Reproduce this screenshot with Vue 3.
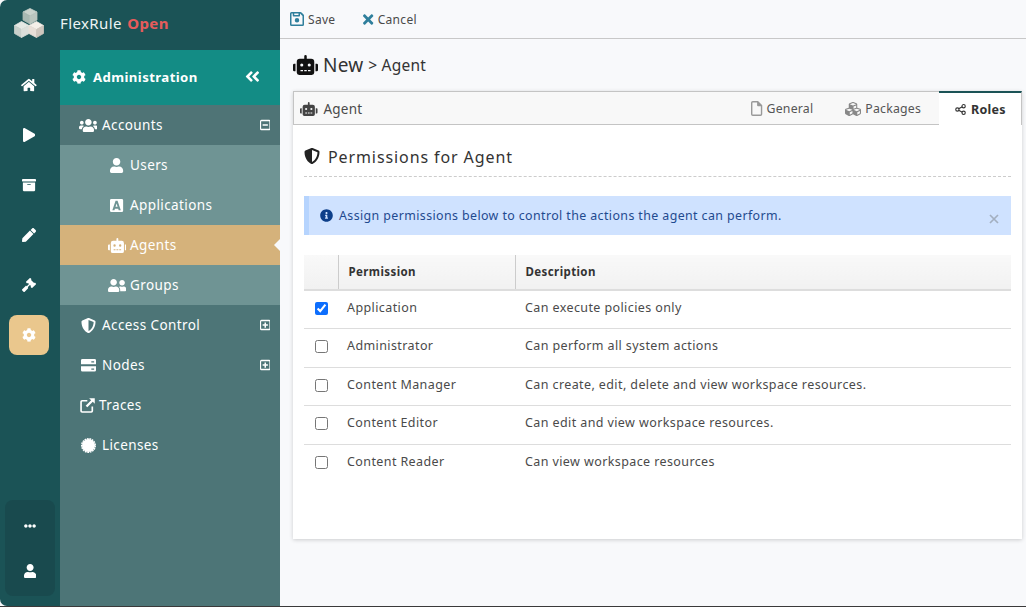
<script setup>
import { h } from 'vue'

const icons = {
  home: [576, 'M280.37 148.26L96 300.11V464a16 16 0 0 0 16 16l112.06-.29a16 16 0 0 0 15.92-16V368a16 16 0 0 1 16-16h64a16 16 0 0 1 16 16v95.64a16 16 0 0 0 16 16.05L464 480a16 16 0 0 0 16-16V300L295.67 148.26a12.19 12.19 0 0 0-15.3 0zM571.6 251.47L488 182.56V44.05a12 12 0 0 0-12-12h-56a12 12 0 0 0-12 12v72.61L318.47 43a48 48 0 0 0-61 0L4.34 251.47a12 12 0 0 0-1.6 16.9l25.5 31A12 12 0 0 0 45.15 301l235.22-193.74a12.19 12.19 0 0 1 15.3 0L530.9 301a12 12 0 0 0 16.9-1.6l25.5-31a12 12 0 0 0-1.7-16.93z'],
  play: [448, 'M424.4 214.7L72.4 6.6C43.8-10.3 0 6.1 0 47.9V464c0 37.5 40.7 60.1 72.4 41.3l352-208c31.4-18.5 31.5-64.1 0-82.6z'],
  archive: [512, 'M32 448c0 17.7 14.3 32 32 32h384c17.7 0 32-14.3 32-32V160H32v288zm160-212c0-6.6 5.4-12 12-12h104c6.6 0 12 5.4 12 12v8c0 6.6-5.4 12-12 12H204c-6.6 0-12-5.4-12-12v-8zM480 32H32C14.3 32 0 46.3 0 64v48c0 8.8 7.2 16 16 16h480c8.8 0 16-7.2 16-16V64c0-17.7-14.3-32-32-32z'],
  pen: [512, 'M290.74 93.24l128.02 128.02-277.99 277.99-114.14 12.6C11.35 513.54-1.56 500.62.14 485.34l12.7-114.22 277.9-278.88zm207.2-19.06l-60.11-60.11c-18.75-18.75-49.16-18.75-67.91 0l-56.55 56.55 128.02 128.02 56.55-56.55c18.75-18.76 18.75-49.16 0-67.91z'],
  gavel: [512, 'M504.971 199.362l-22.627-22.627c-9.373-9.373-24.569-9.373-33.941 0l-5.657 5.657L329.608 69.255l5.657-5.657c9.373-9.373 9.373-24.569 0-33.941L312.638 7.029c-9.373-9.373-24.569-9.373-33.941 0L154.246 131.48c-9.373 9.373-9.373 24.569 0 33.941l22.627 22.627c9.373 9.373 24.569 9.373 33.941 0l5.657-5.657 39.598 39.598-81.04 81.04-5.657-5.657c-12.497-12.497-32.758-12.497-45.255 0L9.373 412.118c-12.497 12.497-12.497 32.758 0 45.255l45.255 45.255c12.497 12.497 32.758 12.497 45.255 0l114.745-114.745c12.497-12.497 12.497-32.758 0-45.255l-5.657-5.657 81.04-81.04 39.598 39.598-5.657 5.657c-9.373 9.373-9.373 24.569 0 33.941l22.627 22.627c9.373 9.373 24.569 9.373 33.941 0l124.451-124.451c9.372-9.372 9.372-24.568 0-33.941z'],
  cog: [512, 'M487.4 315.7l-42.6-24.6c4.3-23.2 4.3-47 0-70.2l42.6-24.6c4.9-2.8 7.1-8.6 5.5-14-11.1-35.6-30-67.8-54.7-94.6-3.8-4.1-10-5.1-14.8-2.3L380.8 110c-17.9-15.4-38.5-27.3-60.8-35.1V25.8c0-5.6-3.9-10.5-9.4-11.7-36.7-8.2-74.3-7.8-109.2 0-5.5 1.2-9.4 6.1-9.4 11.7V75c-22.2 7.9-42.8 19.8-60.8 35.1L88.7 85.5c-4.9-2.8-11-1.9-14.8 2.3-24.7 26.7-43.6 58.9-54.7 94.6-1.7 5.4.6 11.2 5.5 14L67.3 221c-4.3 23.2-4.3 47 0 70.2l-42.6 24.6c-4.9 2.8-7.1 8.6-5.5 14 11.1 35.6 30 67.8 54.7 94.6 3.8 4.1 10 5.1 14.8 2.3l42.6-24.6c17.9 15.4 38.5 27.3 60.8 35.1v49.2c0 5.6 3.9 10.5 9.4 11.7 36.7 8.2 74.3 7.8 109.2 0 5.5-1.2 9.4-6.1 9.4-11.7v-49.2c22.2-7.9 42.8-19.8 60.8-35.1l42.6 24.6c4.9 2.8 11 1.9 14.8-2.3 24.7-26.7 43.6-58.9 54.7-94.6 1.5-5.5-.7-11.3-5.6-14.1zM256 336c-44.1 0-80-35.9-80-80s35.9-80 80-80 80 35.9 80 80-35.9 80-80 80z'],
  user: [448, 'M224 256c70.7 0 128-57.3 128-128S294.7 0 224 0 96 57.3 96 128s57.3 128 128 128zm89.6 32h-16.7c-22.2 10.2-46.9 16-72.9 16s-50.6-5.8-72.9-16h-16.7C60.2 288 0 348.2 0 422.4V464c0 26.5 21.5 48 48 48h352c26.5 0 48-21.5 48-48v-41.6c0-74.2-60.2-134.4-134.4-134.4z'],
  users: [640, 'M96 224c35.3 0 64-28.7 64-64s-28.7-64-64-64-64 28.7-64 64 28.7 64 64 64zm448 0c35.3 0 64-28.7 64-64s-28.7-64-64-64-64 28.7-64 64 28.7 64 64 64zm32 32h-64c-17.6 0-33.5 7.1-45.1 18.6 40.3 22.1 68.9 62 75.1 109.4h66c17.7 0 32-14.3 32-32v-32c0-35.3-28.7-64-64-64zm-256 0c61.9 0 112-50.1 112-112S381.9 32 320 32 208 82.1 208 144s50.1 112 112 112zm76.8 32h-8.3c-20.8 10-43.9 16-68.5 16s-47.6-6-68.5-16h-8.3C179.6 288 128 339.6 128 403.2V432c0 26.5 21.5 48 48 48h288c26.5 0 48-21.5 48-48v-28.8c0-63.6-51.6-115.2-115.2-115.2zm-223.7-13.4C161.5 263.1 145.6 256 128 256H64c-35.3 0-64 28.7-64 64v32c0 17.7 14.3 32 32 32h65.9c6.3-47.4 34.9-87.3 75.2-109.4z'],
  friends: [640, 'M192 256c61.9 0 112-50.1 112-112S253.9 32 192 32 80 82.1 80 144s50.1 112 112 112zm76.8 32h-8.3c-20.8 10-43.9 16-68.5 16s-47.6-6-68.5-16h-8.3C51.6 288 0 339.6 0 403.2V432c0 26.5 21.5 48 48 48h288c26.5 0 48-21.5 48-48v-28.8c0-63.6-51.6-115.2-115.2-115.2zM480 256c53 0 96-43 96-96s-43-96-96-96-96 43-96 96 43 96 96 96zm48 32h-3.8c-13.9 4.8-28.6 8-44.2 8s-30.3-3.2-44.2-8H432c-20.4 0-39.2 5.9-55.7 15.4 24.4 26.3 39.7 61.2 39.7 99.8v38.4c0 2.2-.5 4.3-.6 6.4H592c26.5 0 48-21.5 48-48 0-61.9-50.1-112-112-112z'],
  robot: [640, 'M32,224H64V416H32A31.96,31.96,0,0,1,0,384V256A31.96,31.96,0,0,1,32,224Zm512-48V448a64.06,64.06,0,0,1-64,64H160a64.06,64.06,0,0,1-64-64V176a79.97,79.97,0,0,1,80-80H288V32a32,32,0,0,1,64,0V96H464A79.97,79.97,0,0,1,544,176ZM264,256a40,40,0,1,0-40,40A40,40,0,0,0,264,256Zm-8,128H192v32h64Zm96,0H288v32h64ZM456,256a40,40,0,1,0-40,40A40,40,0,0,0,456,256Zm-8,128H384v32h64ZM640,256V384a31.96,31.96,0,0,1-32,32H576V224h32A31.96,31.96,0,0,1,640,256Z'],
  shield: [512, 'M466.5 83.7l-192-80a48.15 48.15 0 0 0-36.9 0l-192 80C27.7 91.1 16 108.6 16 128c0 198.5 114.5 335.7 221.5 380.3 11.8 4.9 25.1 4.9 36.9 0C360.1 472.6 496 349.3 496 128c0-19.4-11.7-36.9-29.5-44.3zM256.1 446.3l-.1-381 175.9 73.3c-3.3 151.4-82.1 261.1-175.8 307.7z'],
  server: [512, 'M48 32h416a48 48 0 0 1 48 48v136H0V80a48 48 0 0 1 48-48zM0 280h512v136a48 48 0 0 1-48 48H48a48 48 0 0 1-48-48zM352 112v40h96v-40zM352 360v40h96v-40z'],
  angles: [448, 'M223.7 239l136-136c9.4-9.4 24.6-9.4 33.9 0l22.6 22.6c9.4 9.4 9.4 24.6 0 33.9L319.9 256l96.4 96.4c9.4 9.4 9.4 24.6 0 33.9L393.7 409c-9.4 9.4-24.6 9.4-33.9 0l-136-136c-9.5-9.4-9.5-24.6-.1-34zm-192 34l136 136c9.4 9.4 24.6 9.4 33.9 0l22.6-22.6c9.4-9.4 9.4-24.6 0-33.9L127.9 256l96.4-96.4c9.4-9.4 9.4-24.6 0-33.9L201.7 103c-9.4-9.4-24.6-9.4-33.9 0l-136 136c-9.5 9.4-9.5 24.6-.1 34z'],
  dots: [512, 'M328 256c0 39.8-32.2 72-72 72s-72-32.2-72-72 32.2-72 72-72 72 32.2 72 72zm104-72c-39.8 0-72 32.2-72 72s32.2 72 72 72 72-32.2 72-72-32.2-72-72-72zm-352 0c-39.8 0-72 32.2-72 72s32.2 72 72 72 72-32.2 72-72-32.2-72-72-72z'],
  cubes: [512, 'M488.6 250.2L392 214V105.5c0-15-9.3-28.4-23.4-33.7l-100-37.5c-8.1-3.1-17.1-3.1-25.3 0l-100 37.5c-14.1 5.3-23.4 18.7-23.4 33.7V214l-96.6 36.2C9.3 255.5 0 268.9 0 283.9V394c0 13.6 7.7 26.1 19.9 32.2l100 50c10.1 5.1 22.1 5.1 32.2 0l103.9-52 103.9 52c10.1 5.1 22.1 5.1 32.2 0l100-50c12.2-6.1 19.9-18.6 19.9-32.2V283.9c0-15-9.3-28.4-23.4-33.7zM358 214.8l-85 31.9v-68.2l85-37v73.3zM154 104.1l102-38.2 102 38.2v.6l-102 41.4-102-41.4v-.6zm84 291.1l-85 42.5v-79.1l85-38.8v75.4zm0-112l-102 41.4-102-41.4v-.6l102-38.2 102 38.2v.6zm240 112l-85 42.5v-79.1l85-38.8v75.4zm0-112l-102 41.4-102-41.4v-.6l102-38.2 102 38.2v.6z'],
  info: [512, 'M256 8C119.043 8 8 119.083 8 256c0 136.997 111.043 248 248 248s248-111.003 248-248C504 119.083 392.957 8 256 8zm0 110c23.196 0 42 18.804 42 42s-18.804 42-42 42-42-18.804-42-42 18.804-42 42-42zm56 254c0 6.627-5.373 12-12 12h-88c-6.627 0-12-5.373-12-12v-24c0-6.627 5.373-12 12-12h12v-64h-12c-6.627 0-12-5.373-12-12v-24c0-6.627 5.373-12 12-12h64c6.627 0 12 5.373 12 12v100h12c6.627 0 12 5.373 12 12v24z'],
  appbox: [448, 'M48 32h352a48 48 0 0 1 48 48v352a48 48 0 0 1-48 48H48a48 48 0 0 1-48-48V80a48 48 0 0 1 48-48zM190 96L80 416h72l16-52h112l16 52h72L258 96zM224 190l36 112h-72z'],
  link: [512, 'M250 64v56H78a14 14 0 0 0-14 14v300a14 14 0 0 0 14 14h300a14 14 0 0 0 14-14V290h56v152a62 62 0 0 1-62 62H70a62 62 0 0 1-62-62V126a62 62 0 0 1 62-62zM312 8h192v192l-68-68-186 186-56-56 186-186z'],
  plus: [448, 'M64 32h320a64 64 0 0 1 64 64v320a64 64 0 0 1-64 64H64a64 64 0 0 1-64-64V96a64 64 0 0 1 64-64zM56 96a8 8 0 0 0-8 8v304a8 8 0 0 0 8 8h336a8 8 0 0 0 8-8V104a8 8 0 0 0-8-8zM192 144h64v80h80v64h-80v80h-64v-80h-80v-64h80z'],
  minus: [448, 'M64 32h320a64 64 0 0 1 64 64v320a64 64 0 0 1-64 64H64a64 64 0 0 1-64-64V96a64 64 0 0 1 64-64zM56 96a8 8 0 0 0-8 8v304a8 8 0 0 0 8 8h336a8 8 0 0 0 8-8V104a8 8 0 0 0-8-8zM112 224h224v64H112z'],
  file: [384, 'M60 0h180l144 144v308a60 60 0 0 1-60 60H60a60 60 0 0 1-60-60V60A60 60 0 0 1 60 0zm0 48a12 12 0 0 0-12 12v392a12 12 0 0 0 12 12h264a12 12 0 0 0 12-12V176H240a32 32 0 0 1-32-32V48z'],
  save: [448, 'M48 32h288a48 48 0 0 1 34 14l64 64a48 48 0 0 1 14 34v288a48 48 0 0 1-48 48H48a48 48 0 0 1-48-48V80a48 48 0 0 1 48-48zm0 48v352h352V160l-80-80v72a24 24 0 0 1-24 24H112a24 24 0 0 1-24-24V80zm88 0v48h136V80zm88 144a72 72 0 1 1 0 144 72 72 0 0 1 0-144z'],
  times: [352, 'M242.7 256l100-100c12.3-12.3 12.3-32.2 0-44.5l-22.2-22.2c-12.3-12.3-32.2-12.3-44.5 0L176 189.3 76 89.3c-12.3-12.3-32.2-12.3-44.5 0L9.3 111.5c-12.3 12.3-12.3 32.2 0 44.5l100 100-100 100c-12.3 12.3-12.3 32.2 0 44.5l22.2 22.2c12.3 12.3 32.2 12.3 44.5 0l100-100 100 100c12.3 12.3 32.2 12.3 44.5 0l22.2-22.2c12.3-12.3 12.3-32.2 0-44.5z']
}

// small helper so the template stays readable
const Ico = (props) => {
  const [w, d] = icons[props.name]
  return h('svg', { viewBox: `0 0 ${w} 512`, class: 'ico' }, [h('path', { d, fill: 'currentColor', 'fill-rule': 'evenodd' })])
}
Ico.props = ['name']

const railItems = ['home', 'play', 'archive', 'pen', 'gavel', 'cog']

const permissions = [
  { name: 'Application', desc: 'Can execute policies only', checked: true },
  { name: 'Administrator', desc: 'Can perform all system actions', checked: false },
  { name: 'Content Manager', desc: 'Can create, edit, delete and view workspace resources.', checked: false },
  { name: 'Content Editor', desc: 'Can edit and view workspace resources.', checked: false },
  { name: 'Content Reader', desc: 'Can view workspace resources', checked: false }
]
</script>

<template>
  <div class="app">
    <aside class="side">
      <div class="brand">
        <svg class="logo" viewBox="0 0 30 30" stroke-linejoin="round">
          <g stroke-width="0.8">
            <polygon points="16,0.5 23,4 16,8 9,4" fill="#c9d2cc" stroke="#c9d2cc" />
            <polygon points="9,4 16,8 16,16 9,12" fill="#a9b9b3" stroke="#a9b9b3" />
            <polygon points="23,4 16,8 16,16 23,12" fill="#bac5bf" stroke="#bac5bf" />
            <polygon points="7.5,13.5 15,17.5 7.5,21.5 0.5,17.5" fill="#e4e8e4" stroke="#e4e8e4" />
            <polygon points="0.5,17.5 7.5,21.5 7.5,29.5 0.5,25.5" fill="#c9d0cb" stroke="#c9d0cb" />
            <polygon points="15,17.5 7.5,21.5 7.5,29.5 15,25.5" fill="#dcdfdb" stroke="#dcdfdb" />
            <polygon points="22.5,13.5 29.5,17.5 22.5,21.5 15,17.5" fill="#f4efe9" stroke="#f4efe9" />
            <polygon points="15,17.5 22.5,21.5 22.5,29.5 15,25.5" fill="#e8dfd8" stroke="#e8dfd8" />
            <polygon points="29.5,17.5 22.5,21.5 22.5,29.5 29.5,25.5" fill="#cfc6be" stroke="#cfc6be" />
          </g>
        </svg>
        <span class="brand-name">FlexRule <b>Open</b></span>
      </div>
      <div class="side-body">
        <nav class="rail">
          <div class="rail-list">
            <div v-for="item in railItems" :key="item" class="rail-item" :class="{ active: item === 'cog' }">
              <Ico :name="item" />
            </div>
          </div>
          <div class="rail-bottom">
            <Ico name="dots" class="r-dots" />
            <Ico name="user" class="r-user" />
          </div>
        </nav>
        <div class="menu">
          <div class="menu-head">
            <Ico name="cog" class="head-cog" />
            <span class="menu-title">Administration</span>
            <Ico name="angles" class="head-angles" />
          </div>
          <div class="row open">
            <span class="row-ico"><Ico name="users" /></span>Accounts
            <Ico name="minus" class="tree" />
          </div>
          <div class="sub"><span class="sub-ico"><Ico name="user" class="s15" /></span>Users</div>
          <div class="sub"><span class="sub-ico"><Ico name="appbox" class="s15" /></span>Applications</div>
          <div class="sub current"><span class="sub-ico"><Ico name="robot" class="s15" /></span>Agents</div>
          <div class="sub"><span class="sub-ico"><Ico name="friends" class="s15" /></span>Groups</div>
          <div class="row">
            <span class="row-ico"><Ico name="shield" /></span>Access Control
            <Ico name="plus" class="tree" />
          </div>
          <div class="row">
            <span class="row-ico"><Ico name="server" /></span>Nodes
            <Ico name="plus" class="tree" />
          </div>
          <div class="row">
            <span class="row-ico link"><Ico name="link" /></span>Traces
          </div>
          <div class="row">
            <span class="row-ico">
              <svg class="ico" viewBox="0 0 30 30">
                <circle cx="15" cy="15" r="13" fill="currentColor" />
                <circle cx="15" cy="15" r="13.5" fill="none" stroke="currentColor" stroke-width="3" stroke-dasharray="3.5 1.5" />
              </svg>
            </span>Licenses
          </div>
        </div>
      </div>
    </aside>

    <main class="main">
      <div class="toolbar">
        <span class="tool"><Ico name="save" class="t-save" />Save</span>
        <span class="tool"><Ico name="times" class="t-cancel" />Cancel</span>
      </div>
      <div class="page">
        <h1 class="page-title">
          <Ico name="robot" class="title-ico" />
          <span class="big">New</span><span class="crumb">&gt; Agent</span>
        </h1>
        <section class="panel">
          <div class="tabs">
            <div class="tabs-left"><Ico name="robot" class="tab-robot" />Agent</div>
            <div class="tab general"><Ico name="file" class="tab-file" />General</div>
            <div class="tab"><Ico name="cubes" class="tab-cubes" />Packages</div>
            <div class="tab active">
              <svg class="tab-share" viewBox="0 0 12 12">
                <path d="M4 5.2 8 3M4 6.8 8 9" stroke="currentColor" stroke-width="1.2" fill="none" />
                <circle cx="2.6" cy="6" r="1.8" stroke="currentColor" stroke-width="1.2" fill="none" />
                <circle cx="9.4" cy="2.4" r="1.8" stroke="currentColor" stroke-width="1.2" fill="none" />
                <circle cx="9.4" cy="9.6" r="1.8" stroke="currentColor" stroke-width="1.2" fill="none" />
              </svg>
              Roles
            </div>
          </div>
          <div class="panel-body">
            <h2 class="sec-title"><Ico name="shield" class="sec-ico" />Permissions for Agent</h2>
            <div class="alert">
              <Ico name="info" class="alert-ico" />
              <span>Assign permissions below to control the actions the agent can perform.</span>
              <svg class="alert-x" viewBox="0 0 10 10">
                <path d="M1 1 9 9M9 1 1 9" stroke="currentColor" stroke-width="1.7" />
              </svg>
            </div>
            <table class="perm">
              <thead>
                <tr>
                  <th class="c0"></th>
                  <th class="c1">Permission</th>
                  <th>Description</th>
                </tr>
              </thead>
              <tbody>
                <tr v-for="p in permissions" :key="p.name">
                  <td class="c0"><input type="checkbox" :checked="p.checked" /></td>
                  <td>{{ p.name }}</td>
                  <td class="desc">{{ p.desc }}</td>
                </tr>
              </tbody>
            </table>
          </div>
        </section>
      </div>
    </main>
  </div>
</template>

<style>
html, body {
  margin: 0;
  background: #3a3a3a;
}
</style>

<style scoped>
.app {
  display: flex;
  width: 1026px;
  height: 606px;
  overflow: hidden;
  font-family: "Noto Sans", "Open Sans", sans-serif;
  font-size: 13px;
  letter-spacing: 0.4px;
  color: #4a4a4a;
  background: #f8f9fb;
}

.ico {
  display: block;
  height: 14px;
  fill: currentColor;
}

/* Left side */
.side {
  width: 280px;
  flex: none;
  display: flex;
  flex-direction: column;
  background: #1b5356;
  color: #fff;
  border-radius: 7px 0 0 7px;
}

.brand {
  height: 50px;
  flex: none;
  display: flex;
  align-items: center;
  padding-left: 14px;
  padding-bottom: 4px;
  box-sizing: border-box;
  gap: 16px;
}

.logo {
  width: 30px;
  height: 30px;
}

.brand-name {
  font-size: 15px;
  color: #eef4f4;
}

.brand-name b {
  color: #e65c5c;
  font-weight: 700;
  margin-left: 1px;
}

.side-body {
  flex: 1;
  display: flex;
  min-height: 0;
}

.rail {
  width: 60px;
  flex: none;
  display: flex;
  flex-direction: column;
  align-items: center;
  justify-content: space-between;
  padding-top: 15px;
  padding-bottom: 10px;
  box-sizing: border-box;
}

.rail-list {
  margin-right: 2px;
}

.rail-item {
  width: 40px;
  height: 40px;
  margin-bottom: 10px;
  display: flex;
  align-items: center;
  justify-content: center;
  border-radius: 8px;
}

.rail-item.active {
  background: #eac78d;
}

.rail-bottom {
  width: 50px;
  height: 96px;
  border-radius: 8px;
  background: #194a4e;
  display: flex;
  flex-direction: column;
  align-items: center;
  padding-top: 20px;
  box-sizing: border-box;
}

.r-dots {
  height: 12px;
}

.r-user {
  height: 14px;
  margin-top: 32px;
}

/* Menu */
.menu {
  flex: 1;
  background: #4d7577;
}

.menu-head {
  height: 55px;
  display: flex;
  align-items: center;
  padding-left: 12px;
  padding-right: 20px;
  padding-bottom: 2px;
  box-sizing: border-box;
  background: #138c85;
  font-size: 13.2px;
  font-weight: 700;
}

.head-cog {
  height: 14px;
}

.menu-title {
  margin-left: 7px;
  flex: 1;
}

.head-angles {
  height: 17px;
}

.row {
  height: 40px;
  display: flex;
  align-items: center;
  padding-left: 20px;
  font-size: 13.5px;
}

.row.open {
  background: #4f7476;
}

.row-ico {
  width: 16px;
  margin-right: 6px;
  display: flex;
  justify-content: center;
}

.row-ico.link {
  margin-left: -1px;
  margin-right: 4px;
}

.row-ico .ico {
  height: 15px;
  flex: none;
}

.tree {
  height: 12px;
  margin-left: auto;
  margin-right: 10px;
}

.sub {
  position: relative;
  height: 40px;
  display: flex;
  align-items: center;
  padding-left: 48px;
  background: #6f9494;
  font-size: 13.5px;
}

.sub-ico {
  width: 18px;
  margin-right: 4px;
  display: flex;
  justify-content: center;
}

.s15 {
  height: 15px;
  flex: none;
}

.sub.current {
  background: #d5b27b;
}

.sub.current::after {
  content: "";
  position: absolute;
  right: 0;
  top: 14px;
  border-style: solid;
  border-width: 6px 6px 6px 0;
  border-color: transparent #f8f9fb transparent transparent;
}

/* Main */
.main {
  flex: 1;
  min-width: 0;
}

.toolbar {
  height: 38px;
  display: flex;
  align-items: center;
  padding-left: 10px;
  gap: 28px;
  border-bottom: 1px solid #c8c8c8;
  font-size: 12px;
  letter-spacing: 0.3px;
}

.tool {
  display: flex;
  align-items: center;
  gap: 4px;
}

.t-save {
  height: 16px;
  color: #2f7f9c;
}

.t-cancel {
  height: 15px;
  color: #2f7f9c;
}

.page {
  padding: 0 4px 0 13px;
}

.page-title {
  margin: 0;
  height: 52px;
  display: flex;
  align-items: center;
  font-weight: 400;
  color: #333;
  letter-spacing: 0.2px;
}

.title-ico {
  height: 20px;
  color: #111;
}

.big {
  font-size: 19px;
  margin-left: 5px;
}

.crumb {
  font-size: 15.5px;
  margin-left: 5px;
}

.panel {
  background: #fff;
  height: 448px;
  box-shadow: 0 1px 4px rgba(0, 0, 0, 0.18);
}

.tabs {
  height: 34px;
  display: flex;
  align-items: stretch;
  box-sizing: border-box;
  background: #f8f8f8;
  border: 1px solid #c4c4c4;
  border-right: none;
  font-size: 12.3px;
  letter-spacing: 0.2px;
}

.tabs-left {
  flex: 1;
  display: flex;
  align-items: center;
  padding-left: 6px;
  padding-top: 1px;
  gap: 6px;
  font-size: 13.5px;
}

.tab-robot {
  height: 14px;
  color: #444;
}

.tab {
  display: flex;
  align-items: center;
  gap: 4px;
  padding: 1px 18px 0 0;
  color: #555;
}

.tab.general {
  padding-right: 32px;
}

.tab-file {
  height: 15px;
  color: #999;
}

.tab-cubes {
  height: 16px;
  color: #888;
}

.tab.active {
  width: 83px;
  box-sizing: border-box;
  justify-content: flex-start;
  padding: 0 0 0 16px;
  margin: -1px 0 -1px;
  background: #fff;
  border-top: 2px solid #1b5356;
  border-right: 1px solid #c4c4c4;
  color: #333;
  font-weight: 700;
  font-size: 12.5px;
  letter-spacing: 0.25px;
  gap: 5px;
}

.tab-share {
  width: 11px;
  height: 11px;
  color: #333;
}

.panel-body {
  padding: 0 11px;
}

.sec-title {
  margin: 0;
  height: 52px;
  display: flex;
  align-items: flex-end;
  gap: 8px;
  padding-bottom: 8px;
  border-bottom: 1px dashed #ccc;
  font-size: 16px;
  font-weight: 400;
  letter-spacing: 0.9px;
  color: #333;
  box-sizing: border-box;
}

.sec-ico {
  height: 16px;
  color: #222;
  margin-bottom: 4px;
}

.alert {
  margin-top: 19px;
  height: 39px;
  display: flex;
  align-items: center;
  gap: 6px;
  box-sizing: border-box;
  padding: 0 12px 0 11px;
  background: #cfe2ff;
  border-left: 5px solid #b6d4fe;
  color: #1f4a8f;
  font-size: 12.4px;
}

.alert span {
  flex: 1;
}

.alert-ico {
  height: 13px;
  color: #0d3f8a;
}

.alert-x {
  width: 10px;
  height: 10px;
  margin-top: 6px;
  color: #a3afc0;
}

.perm {
  margin-top: 20px;
  width: 100%;
  border-collapse: collapse;
  table-layout: fixed;
  font-size: 12.5px;
}

.perm th {
  height: 35px;
  box-sizing: border-box;
  padding: 0 10px 2px;
  text-align: left;
  font-weight: 700;
  font-size: 11.5px;
  color: #333;
  background: linear-gradient(#f9f9f9, #f1f1f1);
  border-right: 1px solid #ccc;
  border-bottom: 2px solid #ddd;
}

.perm th:last-child {
  border-right: none;
}

.perm .c0 {
  width: 34px;
  padding: 0;
  text-align: center;
}

.perm .c1 {
  width: 177px;
}

.perm td {
  height: 38.5px;
  padding: 0 10px 4px 9px;
  border-bottom: 1px solid #ddd;
  box-sizing: border-box;
}

.perm td.desc {
  padding-left: 10px;
}

.perm tr:last-child td {
  border-bottom: none;
}

.perm td.c0 {
  padding: 0 0 2px;
}

.perm input {
  display: block;
  width: 13px;
  height: 13px;
  margin: 0 auto;
  accent-color: #0d6efd;
}
</style>
